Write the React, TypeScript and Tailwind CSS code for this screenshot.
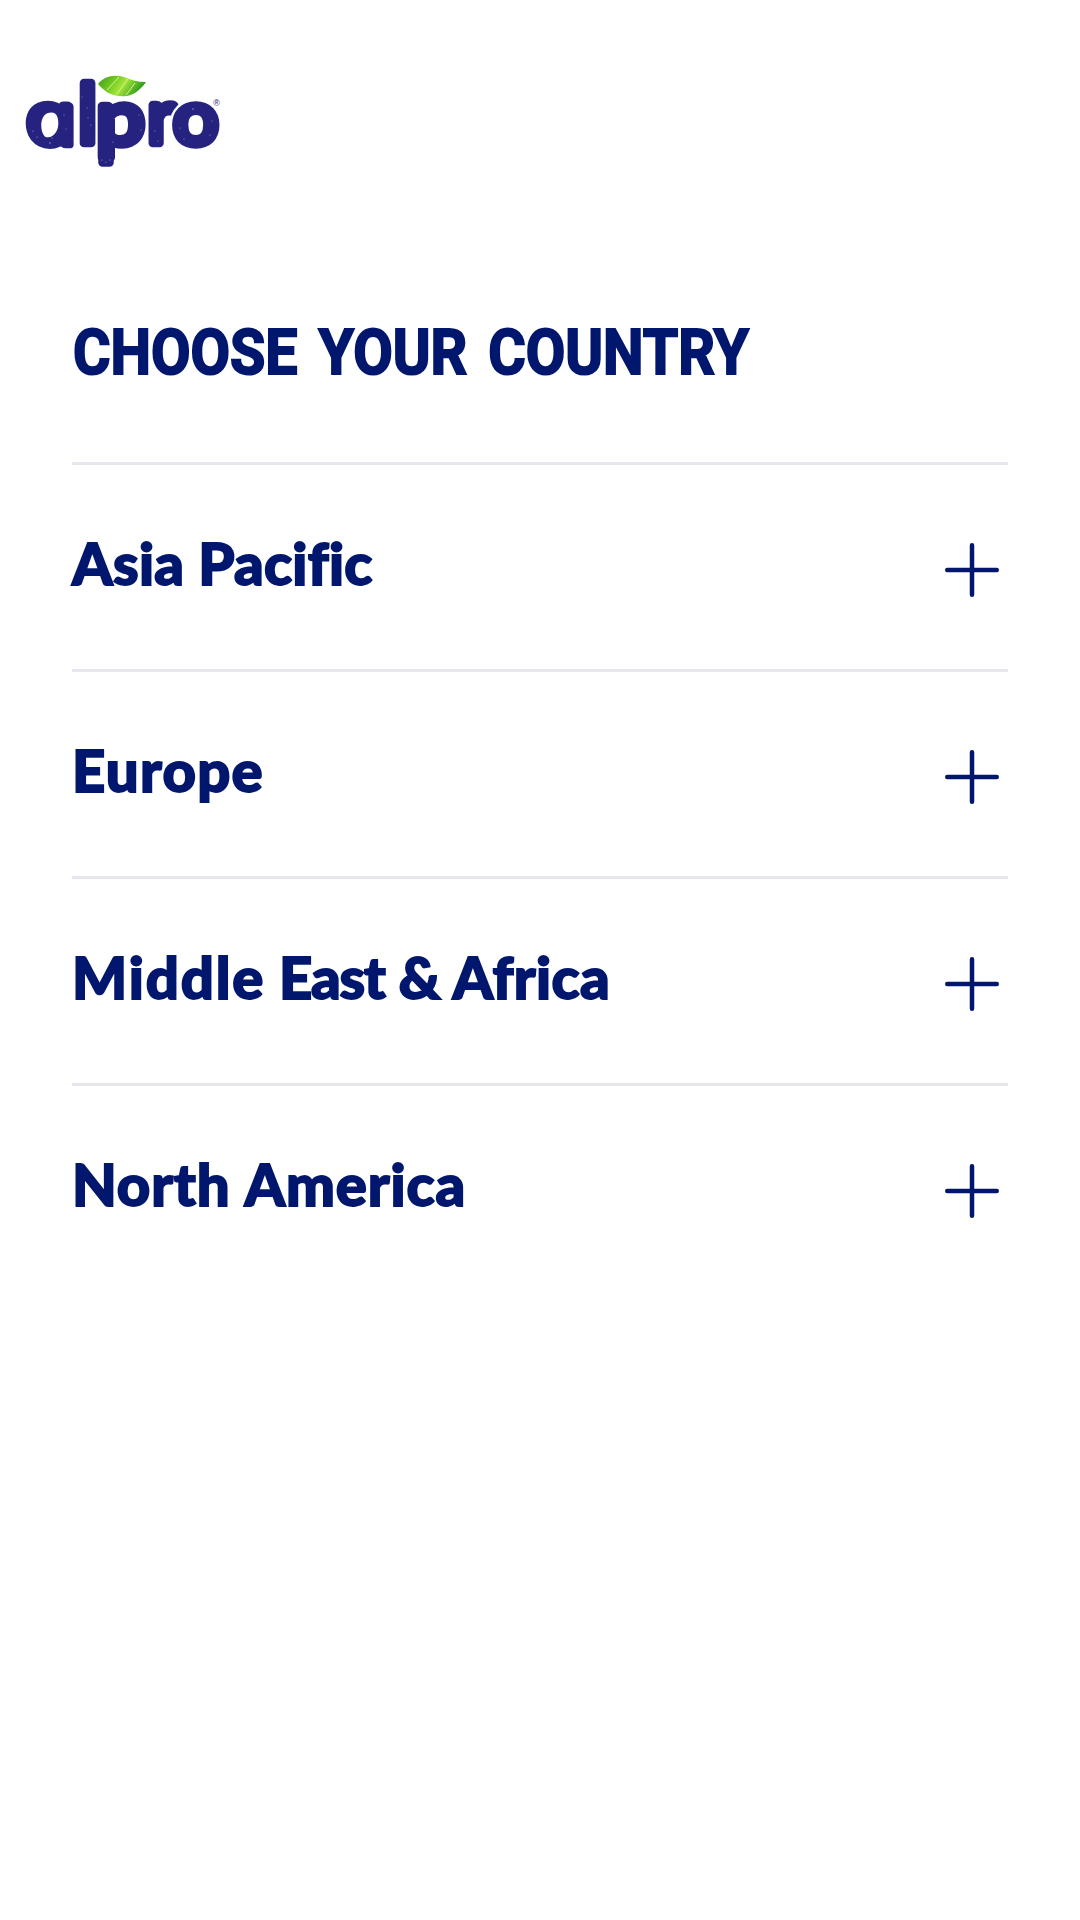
import { Fragment, useState } from 'react';

const regions = [
  {
    name: 'Asia Pacific',
    words: [
      { text: 'Asia', spacing: 'tracking-[0.3px]' },
      { text: 'Pacific', spacing: 'tracking-[0.3px]' },
    ],
  },
  {
    name: 'Europe',
    words: [{ text: 'Europe', spacing: 'tracking-[1.3px]' }],
  },
  {
    name: 'Middle East & Africa',
    words: [
      { text: 'Middle', spacing: 'tracking-[1.9px]' },
      { text: 'East', spacing: 'tracking-[-1.2px]' },
      { text: '&', spacing: 'tracking-[-2px]' },
      { text: 'Africa', spacing: 'tracking-[0.4px]' },
    ],
  },
  {
    name: 'North America',
    words: [
      { text: 'North', spacing: 'tracking-[0.9px]' },
      { text: 'America', spacing: 'tracking-[0.9px]' },
    ],
  },
];

// Worn-print flecks in the wordmark: x, y, radius
const flecks = [
  [33, 131, 0.6], [37, 137, 0.5], [50, 143, 0.7], [52, 138, 0.5], [64, 115, 0.5],
  [66, 129, 0.5], [82, 97, 0.5], [87, 108, 0.5], [88, 118, 0.5], [91, 125, 0.5],
  [102, 160, 0.6], [106, 162, 0.5], [110, 160, 0.6], [113, 142, 0.5], [139, 115, 0.5], [141, 130, 0.5],
  [155, 131, 0.5], [158, 141, 0.5], [180, 128, 0.5], [184, 139, 0.5], [193, 109, 0.7],
  [212, 121, 0.5], [210, 135, 0.5],
];

function Logo() {
  return (
    <svg width="240" height="140" viewBox="0 50 240 140" className="block" role="img" aria-label="alpro">
      <defs>
        <linearGradient id="leaf" x1="0" y1="0" x2="1" y2="0.3">
          <stop offset="0" stopColor="#3d9a1c" />
          <stop offset="0.35" stopColor="#6fc722" />
          <stop offset="0.6" stopColor="#a5e53a" />
          <stop offset="1" stopColor="#2f9a1d" />
        </linearGradient>
      </defs>
      <g
        fill="#262380"
        stroke="#262380"
        strokeWidth="8.5"
        strokeLinejoin="round"
        fontFamily="Lato, sans-serif"
        fontWeight="400"
        fontSize="75"
      >
        <text transform="translate(31 144) scale(1.25 1) skewX(12)" fontFamily="'Open Sans', sans-serif" fontStyle="italic" fontWeight="300" fontSize="72">a</text>
        <text x="78" y="143" fontSize="81">l</text>
        <rect x="102.5" y="140" width="7" height="22.5" />
        <text transform="translate(96.5 144) scale(1.14 1)">p</text>
        <text transform="translate(147.5 143)">r</text>
        <circle cx="196" cy="124.5" r="26.5" fill="#fff" stroke="none" />
        <text transform="translate(173.3 144) scale(1.06 1)">o</text>
      </g>
      <g fill="#a9a7d6">
        {flecks.map(([x, y, r]) => (
          <circle key={`${x}-${y}`} cx={x} cy={y} r={r} />
        ))}
      </g>
      <path d="M98 84C104 76 114 74 124 77C131 80 138 82 146 82C140 91 130 98 120 96C111 96 104 91 98 84Z" fill="url(#leaf)" />
      <path d="M107 90L119 77M117 94L128 79M126 95L135 83" stroke="#d5f58a" strokeWidth="1" />
      <text x="213.3" y="106" fontFamily="'Liberation Sans', sans-serif" fontSize="9" fill="#262380">®</text>
    </svg>
  );
}

function PlusIcon() {
  return (
    <svg width="54" height="54" viewBox="0 0 54 54" className="mt-1.5 mr-[9px] shrink-0" aria-hidden="true">
      <path d="M27 2.25V51.75M2.25 27H51.75" stroke="#00176d" strokeWidth="4.5" strokeLinecap="round" />
    </svg>
  );
}

export default function App() {
  const [open, setOpen] = useState<string | null>(null);

  return (
    <div className="min-h-[1920px] bg-white text-[#00176d]">
      <header className="h-[190px] pt-[50px]">
        <Logo />
      </header>

      <main className="px-[72px] pt-[122px]">
        <h1 className="ml-px flex h-[150px] origin-left scale-x-[0.91] gap-[23px] pt-px whitespace-nowrap font-['Roboto',sans-serif] text-[63px] leading-[80px] font-bold uppercase [-webkit-text-stroke:2px_#00176d] [stroke-linejoin:round]">
          <span>Choose</span>
          <span>Your</span>
          <span>Country</span>
        </h1>

        <ul>
          {regions.map((region) => (
            <li key={region.name} className="border-t-[3px] border-[#e5e6ee]">
              <button
                type="button"
                aria-expanded={open === region.name}
                onClick={() => setOpen(open === region.name ? null : region.name)}
                className="flex h-[204px] w-full items-center justify-between text-left"
              >
                <span className="mb-[9px] font-['Lato',sans-serif] text-[58px] leading-[70px] font-black whitespace-nowrap [-webkit-text-stroke:1.8px_#00176d]">
                  {region.words.map((word, i) => (
                    <Fragment key={word.text}>
                      {i > 0 && ' '}
                      <span className={word.spacing}>{word.text}</span>
                    </Fragment>
                  ))}
                </span>
                <PlusIcon />
              </button>
            </li>
          ))}
        </ul>
      </main>
    </div>
  );
}
